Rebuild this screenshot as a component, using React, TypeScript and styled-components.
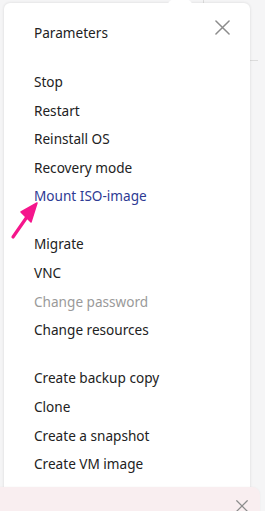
import styled, { createGlobalStyle } from "styled-components";

const GlobalStyle = createGlobalStyle`
  html, body {
    margin: 0;
    padding: 0;
    background: #f5f5f6;
    font-family: "Noto Sans", "Open Sans", sans-serif;
    overflow: hidden;
  }
`;

type Item = { label: string; tone?: "active" | "disabled" };

const groups: Item[][] = [
  [
    { label: "Stop" },
    { label: "Restart" },
    { label: "Reinstall OS" },
    { label: "Recovery mode" },
    { label: "Mount ISO-image", tone: "active" },
  ],
  [
    { label: "Migrate" },
    { label: "VNC" },
    { label: "Change password", tone: "disabled" },
    { label: "Change resources" },
  ],
  [
    { label: "Create backup copy" },
    { label: "Clone" },
    { label: "Create a snapshot" },
    { label: "Create VM image" },
    { label: "Convert to template" },
  ],
];

const CloseIcon = ({ size }: { size: number }) => (
  <svg width={size} height={size} viewBox="0 0 16 16" fill="none">
    <path
      d="M1 1L15 15M15 1L1 15"
      stroke="#8c8c8c"
      strokeWidth="1.6"
      strokeLinecap="round"
    />
  </svg>
);

export default function App() {
  return (
    <>
      <GlobalStyle />
      <Page>
        <PageLine />
        <SideRule />
        <Menu>
          <Notch />
          <Header>
            <Title>Parameters</Title>
            <CloseButton>
              <CloseIcon size={15} />
            </CloseButton>
          </Header>
          {groups.map((group, gi) => (
            <Group key={gi}>
              {group.map((item) => (
                <MenuItem key={item.label} $tone={item.tone}>
                  {item.label}
                </MenuItem>
              ))}
            </Group>
          ))}
        </Menu>

        <Pointer width="40" height="50" viewBox="0 0 40 50">
          <path
            d="M8 45L24 22"
            stroke="#f5168c"
            strokeWidth="3.2"
            strokeLinecap="round"
          />
          <path
            d="M32 11L16 20L26 30Z"
            fill="#f5168c"
            stroke="#f5168c"
            strokeWidth="1.5"
            strokeLinejoin="round"
          />
        </Pointer>

        <Toast>
          <ToastIcon width="14" height="14" viewBox="0 0 14 14">
            <circle cx="7" cy="7" r="6" fill="#333333" />
          </ToastIcon>
          <ToastClose>
            <CloseIcon size={12} />
          </ToastClose>
        </Toast>
      </Page>
    </>
  );
}

const Page = styled.div`
  position: relative;
  width: 265px;
  height: 511px;
  overflow: hidden;
  padding: 3px 0 0 4px;
  box-sizing: border-box;
`;

const PageLine = styled.div`
  position: absolute;
  top: 0;
  left: 203px;
  width: 1px;
  height: 4px;
  background: #dcdcdc;
`;

const SideRule = styled.div`
  position: absolute;
  top: 60px;
  left: 250px;
  width: 8px;
  height: 1px;
  background: #dcdcdc;
`;

const Menu = styled.div`
  position: relative;
  width: 246px;
  background: #ffffff;
  border-radius: 6px;
  box-shadow: 0 0 3px rgba(0, 0, 0, 0.12);
  padding: 15px 20px 40px 30px;
  box-sizing: border-box;
`;

const Notch = styled.div`
  position: absolute;
  top: -4px;
  left: 162px;
  width: 28px;
  height: 10px;
  border-radius: 10px 10px 0 0;
  background: #ffffff;
`;

const Header = styled.div`
  display: flex;
  align-items: flex-start;
  justify-content: space-between;
  height: 26px;
`;

const Title = styled.div`
  font-size: 13.6px;
  line-height: 20px;
  color: #222222;
  margin-top: 5px;
`;

const CloseButton = styled.div`
  display: flex;
  width: 15px;
  height: 15px;
  margin-top: 2px;
`;

const Group = styled.div`
  display: flex;
  flex-direction: column;
  margin-top: 24px;

  & + & {
    margin-top: 19.5px;
  }
`;

const MenuItem = styled.div<{ $tone?: "active" | "disabled" }>`
  font-size: 13.6px;
  line-height: 28.6px;
  color: ${(p) =>
    p.$tone === "active"
      ? "#2e3a94"
      : p.$tone === "disabled"
      ? "#9a9a9a"
      : "#222222"};
  white-space: nowrap;
`;

const Pointer = styled.svg`
  position: absolute;
  left: 5px;
  top: 192px;
`;

const Toast = styled.div`
  position: absolute;
  top: 487px;
  left: -10px;
  width: 270px;
  height: 60px;
  background: #f9eef0;
  border-radius: 8px;
  box-shadow: 0 0 2px rgba(0, 0, 0, 0.05);
  display: flex;
  justify-content: space-between;
  padding: 13px 12px 0 38px;
  box-sizing: border-box;
`;

const ToastIcon = styled.svg`
  margin-top: 10px;
`;

const ToastClose = styled.div`
  display: flex;
  width: 12px;
  height: 12px;
`;
